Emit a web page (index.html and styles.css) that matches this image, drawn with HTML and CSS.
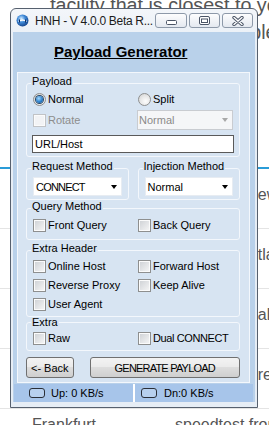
FILE: index.html
```html
<!DOCTYPE html>
<html lang="en">
<head>
    <meta charset="UTF-8">
    <meta name="viewport" content="width=device-width, initial-scale=1.0">
    <title>HNH - Payload Generator</title>
    <link rel="stylesheet" href="styles.css">
</head>
<body>
    <div class="page">
        <p class="intro">facility that is closest to you, with the most reliable results.<br>a more stable and reliable connection to the server.</p>
        <div class="servers">
            <div class="server-row"><span>Newark</span><span>speedtest.newark.net</span></div>
            <div class="server-row"><span>Atlanta</span><span>speedtest.atlanta.net</span></div>
            <div class="server-row"><span>Dallas</span><span>speedtest.dallas.net</span></div>
            <div class="server-row"><span>Bremen</span><span>speedtest.bremen.de</span></div>
            <div class="server-row last"><span>Frankfurt</span><span>speedtest from Vodafone</span></div>
        </div>
    </div>

    <div class="window">
        <div class="titlebar">
            <svg class="app-icon" viewBox="0 0 13 13">
                <defs>
                    <radialGradient id="globe" cx="40%" cy="35%" r="70%">
                        <stop offset="0" stop-color="#d4ecff"/>
                        <stop offset="0.45" stop-color="#3f8ad8"/>
                        <stop offset="1" stop-color="#123f86"/>
                    </radialGradient>
                </defs>
                <circle cx="6.5" cy="6.5" r="6" fill="url(#globe)"/>
                <path d="M2.5 7.5 Q6.5 4.5 10.5 7.5" fill="none" stroke="#fff" stroke-width="1.3"/>
                <path d="M3.5 5.5 v3 M9.5 5.5 v3" stroke="#0d2c63" stroke-width="1"/>
            </svg>
            <span class="title">HNH - V 4.0.0 Beta R...</span>
            <div class="caption-buttons">
                <button class="cap-btn cap-min">
                    <svg width="11" height="5" viewBox="0 0 11 5"><rect x="0.5" y="0.5" width="10" height="4" rx="1" fill="#fff" stroke="#4b5566"/></svg>
                </button>
                <button class="cap-btn">
                    <svg width="11" height="9" viewBox="0 0 11 9"><rect x="0.5" y="0.5" width="10" height="8" rx="1.5" fill="#fff" stroke="#4b5566"/><rect x="2.5" y="3" width="6" height="3.5" fill="#fff" stroke="#4b5566"/></svg>
                </button>
                <button class="cap-btn">
                    <svg width="12" height="10" viewBox="0 0 12 10"><path d="M2 1.5 L10 8.5 M10 1.5 L2 8.5" stroke="#4b5566" stroke-width="3.4" stroke-linecap="round"/><path d="M2 1.5 L10 8.5 M10 1.5 L2 8.5" stroke="#fff" stroke-width="1.4" stroke-linecap="round"/></svg>
                </button>
            </div>
        </div>

        <div class="client">
            <div class="heading">Payload Generator</div>

            <div class="panel">
                <fieldset class="group">
                    <legend>Payload</legend>
                    <div class="pair payload-grid">
                        <label class="opt"><span class="radio on"></span>Normal</label>
                        <label class="opt split"><span class="radio"></span>Split</label>
                        <label class="opt disabled"><span class="check"></span>Rotate</label>
                        <div class="combo disabled"><span>Normal</span><i class="arrow"></i></div>
                    </div>
                    <div class="textbox">URL/Host</div>
                </fieldset>

                <div class="group-row">
                    <fieldset class="group">
                        <legend>Request Method</legend>
                        <div class="combo"><span class="caps">CONNECT</span><i class="arrow"></i></div>
                    </fieldset>
                    <fieldset class="group">
                        <legend>Injection Method</legend>
                        <div class="combo"><span>Normal</span><i class="arrow"></i></div>
                    </fieldset>
                </div>

                <fieldset class="group query">
                    <legend>Query Method</legend>
                    <div class="pair">
                        <label class="opt"><span class="check"></span>Front Query</label>
                        <label class="opt split"><span class="check"></span>Back Query</label>
                    </div>
                </fieldset>

                <fieldset class="group headers">
                    <legend>Extra Header</legend>
                    <div class="pair">
                        <label class="opt"><span class="check"></span>Online Host</label>
                        <label class="opt split"><span class="check"></span>Forward Host</label>
                        <label class="opt"><span class="check"></span>Reverse Proxy</label>
                        <label class="opt split"><span class="check"></span>Keep Alive</label>
                        <label class="opt"><span class="check"></span>User Agent</label>
                    </div>
                </fieldset>

                <fieldset class="group extra">
                    <legend>Extra</legend>
                    <div class="pair">
                        <label class="opt"><span class="check"></span>Raw</label>
                        <label class="opt split"><span class="check"></span><span class="caps-soft">Dual CONNECT</span></label>
                    </div>
                </fieldset>

                <div class="actions">
                    <button class="btn btn-back">&lt;- Back</button>
                    <button class="btn btn-generate"><span class="caps">GENERATE PAYLOAD</span></button>
                </div>
            </div>

            <div class="statusbar">
                <div class="status-item"><span class="link-icon"></span>Up: 0 KB/s</div>
                <div class="status-item right"><span class="link-icon"></span>Dn:0 KB/s</div>
            </div>
        </div>
    </div>
</body>
</html>
```

FILE: styles.css
```css
body {
    margin: 0;
    width: 269px;
    height: 425px;
    overflow: hidden;
    position: relative;
    background-color: #fff;
    font-family: "Liberation Sans", Arial, sans-serif;
}

/* page behind the window */
.intro {
    margin: -8px 0 0 50px;
    font-size: 19.7px;
    line-height: 27px;
    color: #555;
    white-space: nowrap;
}
.servers {
    margin-top: 121px;
    border-top: 2px solid #2a9cd8;
}
.server-row {
    display: grid;
    grid-template-columns: 143px 1fr;
    align-items: center;
    height: 51px;
    padding: 0 0 8px 32px;
    border-bottom: 1px solid #e4e4e4;
    font-size: 16px;
    color: #555;
    white-space: nowrap;
}
.server-row.last {
    align-items: start;
    padding-top: 7px;
    border-bottom: none;
}

/* window */
.window {
    position: absolute;
    left: 10px;
    top: 8px;
    width: 248px;
    height: 400px;
    box-sizing: border-box;
    border: 1px solid #56606e;
    border-radius: 6px 6px 0 0;
    background: linear-gradient(#f3f6fa, #e6edf5 40px);
    padding: 0 2px 5px;
    display: flex;
    flex-direction: column;
}
.titlebar {
    height: 23px;
    display: flex;
    align-items: center;
}
.app-icon {
    width: 13px;
    height: 13px;
    margin-left: 3px;
    flex: none;
}
.title {
    flex: 1;
    margin-left: 6px;
    font-size: 12px;
    letter-spacing: -0.3px;
    color: #1b1b1b;
    white-space: nowrap;
}
.caption-buttons {
    display: flex;
    gap: 2px;
    align-self: flex-start;
    margin: 4px 2px 0 0;
}
.cap-btn {
    width: 31px;
    height: 15px;
    padding: 0;
    box-sizing: border-box;
    border: 1px solid #8d99a9;
    border-radius: 3px;
    background: linear-gradient(#fdfdfe, #e4e9f0);
    display: flex;
    align-items: center;
    justify-content: center;
}
.cap-btn svg {
    display: block;
}
.cap-min {
    width: 32px;
    align-items: flex-end;
    padding-bottom: 2px;
}

.client {
    flex: 1;
    min-height: 0;
    background-color: #b9d1ea;
    display: flex;
    flex-direction: column;
    font-size: 11px;
    color: #000;
}
.heading {
    height: 29px;
    padding: 11px 0 0 41px;
    font-size: 15px;
    line-height: 17px;
    font-weight: bold;
    text-decoration: underline;
}
.panel {
    flex: 1;
    margin: 0 5px 1px 4px;
    border: 1px solid #f3f7fc;
    background-color: #d7e4f2;
    padding: 2px 9px 0 8px;
    display: flex;
    flex-direction: column;
}

/* group boxes */
.group {
    margin: 0;
    min-width: 0;
    padding: 0 6px 3px;
    border: 1px solid #f3f7fc;
    border-radius: 3px;
}
.group legend {
    font-size: 11px;
    line-height: 12px;
    padding: 0 1px 4px;
    margin-left: -2px;
}
.group-row {
    display: flex;
    gap: 9px;
    margin-top: 3px;
}
.group-row .group {
    flex: 1;
}
.group.query .pair {
    margin: 1px 0 3px;
}
.group.headers {
    margin-top: 2px;
    padding-bottom: 4px;
}
.group.extra {
    margin-top: -1px;
    padding-bottom: 4px;
}
.group.extra legend {
    padding-bottom: 0;
}
.group.extra .pair {
    margin-top: 2px;
}

.pair {
    display: grid;
    grid-template-columns: 104px 1fr;
    grid-auto-rows: 16px;
    row-gap: 3px;
    align-items: center;
}
.payload-grid {
    grid-template-rows: 16px 20px;
}
.split {
    margin-left: 1px;
}
.opt {
    display: flex;
    align-items: center;
    gap: 2px;
    white-space: nowrap;
}
.opt.disabled {
    color: #8d8d8d;
}

.radio {
    width: 13px;
    height: 13px;
    flex: none;
    box-sizing: border-box;
    border-radius: 50%;
    border: 1px solid #8e8f8f;
    background: radial-gradient(circle at 60% 65%, #fdfdfd 0%, #e6e6e6 55%, #cdcdcd 100%);
    display: flex;
    align-items: center;
    justify-content: center;
}
.radio.on::after {
    content: "";
    width: 7px;
    height: 7px;
    border-radius: 50%;
    background: radial-gradient(circle at 40% 35%, #a6dbff, #2b7fca 55%, #0f4581);
    box-shadow: 0 0 0 1px #274766;
}
.check {
    width: 13px;
    height: 13px;
    flex: none;
    box-sizing: border-box;
    border: 1px solid #8e8f8f;
    background: linear-gradient(135deg, #cdd0d4 0%, #f7f7f7 100%);
    box-shadow: inset 0 0 0 1px #fbfbfb;
}
.disabled .check {
    border-color: #c1c3c6;
    background: #f2f3f5;
}

.combo {
    height: 19px;
    margin-top: 1px;
    box-sizing: border-box;
    display: flex;
    align-items: center;
    justify-content: space-between;
    padding: 0 4px 0 2px;
    background-color: #fff;
    border: 1px solid #e7ecf2;
}
.payload-grid .combo {
    height: 20px;
    margin-top: 0;
}
.combo.disabled {
    background-color: #f5f6f8;
    border-color: #c9ccd1;
    color: #8a8a8a;
    padding-left: 1px;
}
.arrow {
    width: 0;
    height: 0;
    border-left: 3.5px solid transparent;
    border-right: 3.5px solid transparent;
    border-top: 4px solid #000;
}
.combo.disabled .arrow {
    border-top-color: #a8a8a8;
}
.caps {
    letter-spacing: -0.8px;
}
.caps-soft {
    letter-spacing: -0.4px;
}

.textbox {
    height: 18px;
    box-sizing: border-box;
    margin: 5px -1px 0;
    padding-left: 2px;
    display: flex;
    align-items: center;
    background-color: #fff;
    border: 1px solid #5a5a5a;
}

.actions {
    display: flex;
    gap: 16px;
    margin-top: 6px;
}
.btn {
    height: 21px;
    padding: 0;
    border: 1px solid #707070;
    border-radius: 3px;
    background: linear-gradient(#f3f3f3 0%, #ebebeb 45%, #dddddd 50%, #cfcfcf 100%);
    font-family: "Liberation Sans", Arial, sans-serif;
    font-size: 11px;
    color: #000;
}
.btn-back {
    width: 48px;
}
.btn-generate {
    width: 152px;
}

.statusbar {
    height: 18px;
    margin: 0 2px 0 1px;
    background-color: #a7c5ea;
    display: grid;
    grid-template-columns: 119px 1fr;
}
.status-item {
    display: flex;
    align-items: center;
    gap: 6px;
    padding-left: 15px;
}
.status-item.right {
    border-left: 2px solid #fff;
    padding-left: 6px;
    gap: 7px;
}
.link-icon {
    width: 16px;
    height: 10px;
    box-sizing: border-box;
    border: 1px solid #2a2f38;
    border-radius: 3px;
    background-color: #b7d0ee;
}
```
